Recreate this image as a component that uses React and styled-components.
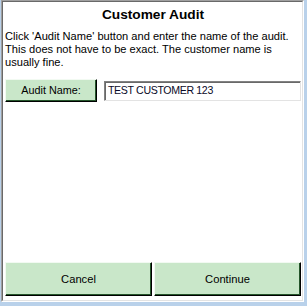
import React from "react";
import styled, { createGlobalStyle } from "styled-components";

const Global = createGlobalStyle`
  html, body { margin: 0; padding: 0; background: #b9d1ea; }
  body { width: 307px; height: 306px; overflow: hidden; }
  * { box-sizing: border-box; }
`;

const Frame = styled.div`
  margin-left: 1px;
  width: 303px;
  height: 302px;
  border-style: solid;
  border-width: 1px;
  border-color: #a0a0a0 #ffffff #ffffff #a0a0a0;
`;

const Panel = styled.div`
  width: 100%;
  height: 100%;
  background: #ffffff;
  border-style: solid;
  border-width: 1px;
  border-color: #696969 #e3e3e3 #e3e3e3 #696969;
  display: flex;
  flex-direction: column;
  padding: 2px 1px 4px 2px;
  font-family: "Liberation Sans", Arial, sans-serif;
  color: #000;
`;

const Title = styled.div`
  font-size: 13.7px;
  font-weight: bold;
  line-height: 17px;
  text-align: center;
  margin-top: 2px;
`;

const Description = styled.p`
  margin: 7px 0 0 0;
  font-size: 11.1px;
  line-height: 13px;
  white-space: nowrap;
`;

const Row = styled.div`
  display: flex;
  align-items: center;
  gap: 7px;
  margin-top: 10px;
`;

const GreenButton = styled.button`
  font-family: "Liberation Sans", Arial, sans-serif;
  font-size: ${(p) => p.$size || 11}px;
  color: #000;
  background: #c9e7c9;
  border-style: solid;
  border-width: 1px;
  border-color: #f2faf2 #000000 #000000 #f2faf2;
  box-shadow: inset -1px -1px 0 #24552a;
  padding: 0 0 1px 0;
  margin: 0;
  width: ${(p) => p.$w || "auto"};
  height: ${(p) => p.$h}px;
  flex: ${(p) => p.$flex || "none"};
`;

const TextBox = styled.div`
  flex: 1;
  height: 20px;
  border-style: solid;
  border-width: 1px;
  border-color: #828282 #e3e3e3 #e3e3e3 #828282;
  box-shadow: inset 1px 1px 0 #696969;
  font-size: 10.6px;
  letter-spacing: -0.35px;
  line-height: 17px;
  padding-left: 3px;
  color: #0a0a28;
  white-space: nowrap;
`;

const Spacer = styled.div`
  flex: 1;
`;

const Footer = styled.div`
  display: flex;
  gap: 2px;
`;

export default function App() {
  return (
    <>
      <Global />
      <Frame>
        <Panel>
          <Title>Customer Audit</Title>
          <Description>
            Click 'Audit Name' button and enter the name of the audit.
            <br />
            This does not have to be exact. The customer name is
            <br />
            usually fine.
          </Description>
          <Row>
            <GreenButton $w="92px" $h={23} $size={10.8}>
              Audit Name:
            </GreenButton>
            <TextBox>TEST CUSTOMER 123</TextBox>
          </Row>
          <Spacer />
          <Footer>
            <GreenButton $flex="1" $h={34} $size={11.2}>
              Cancel
            </GreenButton>
            <GreenButton $flex="1" $h={34} $size={11.2}>
              Continue
            </GreenButton>
          </Footer>
        </Panel>
      </Frame>
    </>
  );
}
